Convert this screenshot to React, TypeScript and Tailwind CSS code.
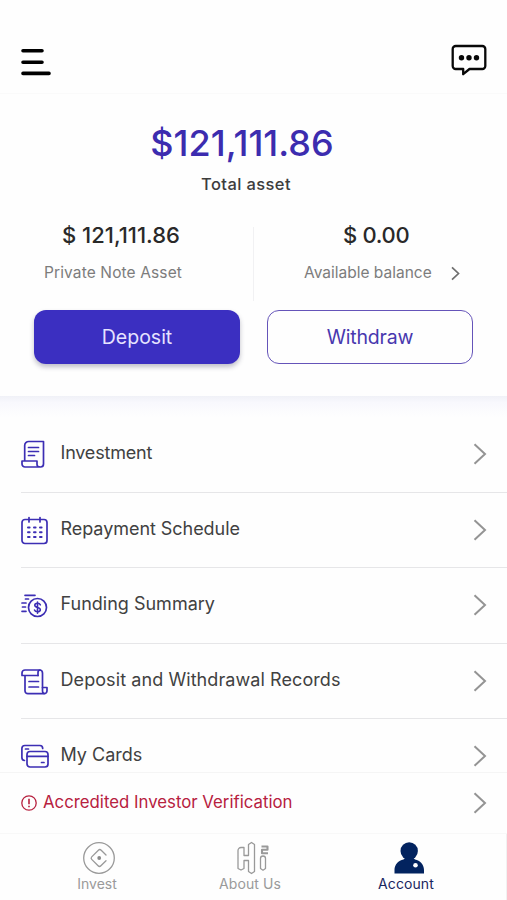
import type { ReactNode } from "react";

const stroke = {
  fill: "none",
  stroke: "currentColor",
  strokeWidth: 1.7,
  strokeLinecap: "round",
  strokeLinejoin: "round",
} as const;

function InvestmentIcon() {
  return (
    <svg width="28" height="30" viewBox="0 0 28 30" {...stroke}>
      <path d="M3.700 20V5.500a4 4 0 0 1 4-4H22.500V24a3 3 0 0 1-3 3H4a3 3 0 0 1-3-3v-3h15v3a2.500 2.500 0 0 0 2.500 2.800" />
      <path d="M7.500 7.500h10M7.500 11.500h10M7.500 15.500h6" />
    </svg>
  );
}

function CalendarIcon() {
  return (
    <svg width="28" height="30" viewBox="0 0 28 30" {...stroke}>
      <rect x="1" y="3.500" width="25" height="24" rx="3" />
      <path d="M8 1.500v4.500M19 1.500v4.500" />
      <path d="M7 11.500h1.600M13 11.500h1.600M19 11.500h1.600M7 16.300h1.600M13 16.300h1.600M19 16.300h1.600M7 21h1.600M13 21h1.600M19 21h1.600" strokeWidth="2" />
    </svg>
  );
}

function FundingIcon() {
  return (
    <svg width="28" height="30" viewBox="0 0 28 30" {...stroke}>
      <circle cx="16.500" cy="16.500" r="9" />
      <path d="M4 4.300h10M4.500 8h3M1 12h4M1.500 16h3M1 20.300h4" />
      <path d="M19.300 13.800c-.4-1-1.400-1.500-2.800-1.500-1.600 0-2.700.7-2.700 2s1 1.800 2.700 2.200c1.800.4 2.800.9 2.800 2.200s-1.200 2-2.800 2c-1.500 0-2.600-.6-3-1.700M16.500 11v11.200" strokeWidth="1.600" />
    </svg>
  );
}

function RecordsIcon() {
  return (
    <svg width="28" height="30" viewBox="0 0 28 30" {...stroke}>
      <path d="M17 8.500H1V6a3 3 0 0 1 3-3h14.500a3 3 0 0 1 3 3v14.500H26V24a3 3 0 0 1-3 2.700H7A3 3 0 0 1 4 24V8.500" />
      <path d="M17 8.500V5.500A2.500 2.500 0 0 1 19 3M21.500 20.500V24a2.500 2.500 0 0 0 1.500 2.500M8 14.500h9.500M8 20h9.500" />
    </svg>
  );
}

function CardsIcon() {
  return (
    <svg width="30" height="30" viewBox="0 0 30 30" {...stroke}>
      <path d="M3.500 18.500A3 3 0 0 1 .9 15.500V6.500a3 3 0 0 1 3-3h15a3 3 0 0 1 2.800 3M4.500 7h3" />
      <rect x="6" y="9.500" width="21" height="15.500" rx="3" />
      <path d="M6 14.300h21M20.500 20.500H23" />
    </svg>
  );
}

function Chevron() {
  return (
    <svg className="shrink-0" width="14" height="24" viewBox="0 0 14 24" fill="none" stroke="#949494" strokeWidth="2">
      <path d="M1.500 2.200 12 12 1.500 21.800" />
    </svg>
  );
}

function Row({ icon, label }: { icon: ReactNode; label: ReactNode }) {
  return (
    <div className="ml-[21px] flex h-[75.5px] items-center border-b border-[#e6e6e8] pr-5 text-[#3c2eb4]">
      <div className="w-[39.5px] shrink-0 pt-[2px]">{icon}</div>
      <div className="flex-1 pb-[2px] text-[18px] leading-6 text-[#414141]">{label}</div>
      <Chevron />
    </div>
  );
}

export default function App() {
  return (
    <div className="flex h-[900px] w-[507px] flex-col overflow-hidden bg-[#fefefe] font-[Inter,'Liberation_Sans',sans-serif]">
      <header className="flex h-[94px] shrink-0 items-start justify-between border-b border-[#fafafa] pr-[20px] pl-[21px]">
        <svg className="mt-[47px]" width="30" height="30" viewBox="0 0 30 30" stroke="#000" strokeWidth="3.600" strokeLinecap="round">
          <path d="M2 3.700h19M2 15.200h19M2 26.400h26" />
        </svg>
        <svg className="mt-[44px]" width="36" height="33" viewBox="0 0 36 33" fill="none" stroke="#080808" strokeWidth="2.300" strokeLinejoin="round">
          <path d="M4.700 2h26.600a3 3 0 0 1 3 3v17a3 3 0 0 1-3 3H18.500L12.200 30.200V25H4.700a3 3 0 0 1-3-3V5a3 3 0 0 1 3-3Z" />
          <g fill="#080808" stroke="none">
            <circle cx="10.500" cy="13.800" r="2.700" />
            <circle cx="18" cy="13.800" r="2.700" />
            <circle cx="25.500" cy="13.800" r="2.700" />
          </g>
        </svg>
      </header>

      <section className="flex h-[302px] shrink-0 flex-col">
        <div className="mt-[27px] pr-[23px] text-center text-[36px] leading-[44px] font-medium text-[#3c2caf]">$121,111.86</div>
        <div className="mt-[8px] pr-[15px] text-center text-[16.5px] leading-[22px] font-medium tracking-[0.4px] text-[#3d3d3d]">Total asset</div>
        <div className="mt-[32px] flex h-[74px]">
          <div className="flex w-[254px] flex-col border-r border-[#f1f1f3]">
            <div className="-mt-[2px] pl-[62px] text-[22px] leading-[20px] font-medium text-[#292929]">$ 121,111.86</div>
            <div className="mt-[17px] pl-[44px] text-[15.5px] leading-[22px] tracking-[0.12px] text-[#7c7c7c]">Private Note Asset</div>
          </div>
          <div className="flex flex-1 flex-col">
            <div className="-mt-[2px] pl-[89px] text-[22px] leading-[20px] font-medium tracking-[-0.3px] text-[#292929]">$ 0.00</div>
            <div className="mt-[17px] flex items-center pl-[50px] text-[15.5px] leading-[22px] text-[#7c7c7c]">
              <span className="w-[147px]">Available balance</span>
              <svg width="9" height="15" viewBox="0 0 9 15" fill="none" stroke="#6e6e6e" strokeWidth="1.700">
                <path d="m1 1.300 6.500 6.200L1 13.700" />
              </svg>
            </div>
          </div>
        </div>
        <div className="mt-[9px] flex gap-[27px] pl-[34px] text-[19.5px]">
          <button className="h-[54px] w-[206px] rounded-[12px] bg-[#3b2fc1] pt-[2px] text-[#e6e3ff] shadow-[0_3px_5px_rgba(30,30,60,0.28)]">Deposit</button>
          <button className="h-[54px] w-[206px] rounded-[12px] border-[1.5px] border-[#6554b9] pt-[2px] tracking-[-0.2px] text-[#4838af]">Withdraw</button>
        </div>
      </section>

      <div className="h-[21px] shrink-0 bg-linear-to-b from-[#f0f1f7] via-[#f8f8fd] via-30% to-[#fefefe]" />

      <main className="h-[355px] shrink-0 overflow-hidden">
        <Row icon={<InvestmentIcon />} label={<span className="tracking-[-0.2px]">Investment</span>} />
        <Row icon={<CalendarIcon />} label={<span className="tracking-[-0.05px]">Repayment Schedule</span>} />
        <Row icon={<FundingIcon />} label="Funding Summary" />
        <Row icon={<RecordsIcon />} label={<span className="tracking-[0.08px]">Deposit and Withdrawal Records</span>} />
        <Row icon={<CardsIcon />} label="My Cards" />
      </main>

      <div className="flex h-[61px] shrink-0 items-center border-t border-[#f5f5f5] pr-5 pl-[21px] text-[#b7213f]">
        <svg width="16" height="16" viewBox="0 0 16 16" fill="none" stroke="currentColor" strokeWidth="1.300">
          <circle cx="8" cy="8" r="7.200" />
          <path d="M8 3.800v5.400M8 10.700v1.500" strokeWidth="1.600" />
        </svg>
        <div className="flex-1 pl-[6px] text-[16.8px]">Accredited Investor Verification</div>
        <Chevron />
      </div>

      <nav className="flex flex-1 border-t border-[#f8f8f8] text-[14px] leading-[18px] text-[#9a9a9a]">
        <div className="flex w-[194px] flex-col items-center pt-[7px]">
          <svg className="ml-[4px]" width="34" height="34" viewBox="0 0 34 34" fill="none" stroke="#999" strokeWidth="1.300" strokeLinecap="round">
            <circle cx="17" cy="17" r="15.300" />
            <path d="m24 14-4.800-4.800a2 2 0 0 0-2.800 0l-6.700 6.700a1.800 1.800 0 0 0 0 2.500l6.400 6.400a2 2 0 0 0 2.800 0L24 19.700" />
            <circle cx="17.200" cy="17" r="1.900" fill="#888" stroke="none" />
          </svg>
          <span>Invest</span>
        </div>
        <div className="flex w-[112px] flex-col items-center pt-[7px]">
          <svg className="ml-[6px]" width="34" height="34" viewBox="0 0 34 34" fill="none" stroke="#999" strokeWidth="1.300" strokeLinejoin="round">
            <path d="M5 6.500a3 3 0 0 0-3 3v18l3 1.500 3-1.500v-8h4.500v11l3 2 3-2V3.500l-3-2-3 2v11H8v-8Z" />
            <path d="M24.500 17.500a2.500 2.500 0 0 1 5 0v10l-2.500 1.700-2.500-1.700Z" />
            <path d="M25.500 5.500h6v3.300h-5.500v3.400h6" strokeWidth="2.100" />
          </svg>
          <span className="tracking-[0.1px]">About Us</span>
        </div>
        <div className="flex flex-1 flex-col items-center border-r border-[#f1f1f1] pt-[7px] text-[#19265f]">
          <svg className="ml-[5px]" width="34" height="34" viewBox="0 0 34 34" fill="#02235f">
            <circle cx="17.200" cy="10" r="8.700" />
            <path d="M2.500 32.500V29c0-5.500 4-9.500 9-10.500L14 16h6.500l2.500 2.500c5 1 9 5 9 10.500v3.500Z" />
            <circle cx="23.500" cy="24.300" r="2.300" fill="#fff" />
          </svg>
          <span className="tracking-[0.1px]">Account</span>
        </div>
      </nav>
    </div>
  );
}
